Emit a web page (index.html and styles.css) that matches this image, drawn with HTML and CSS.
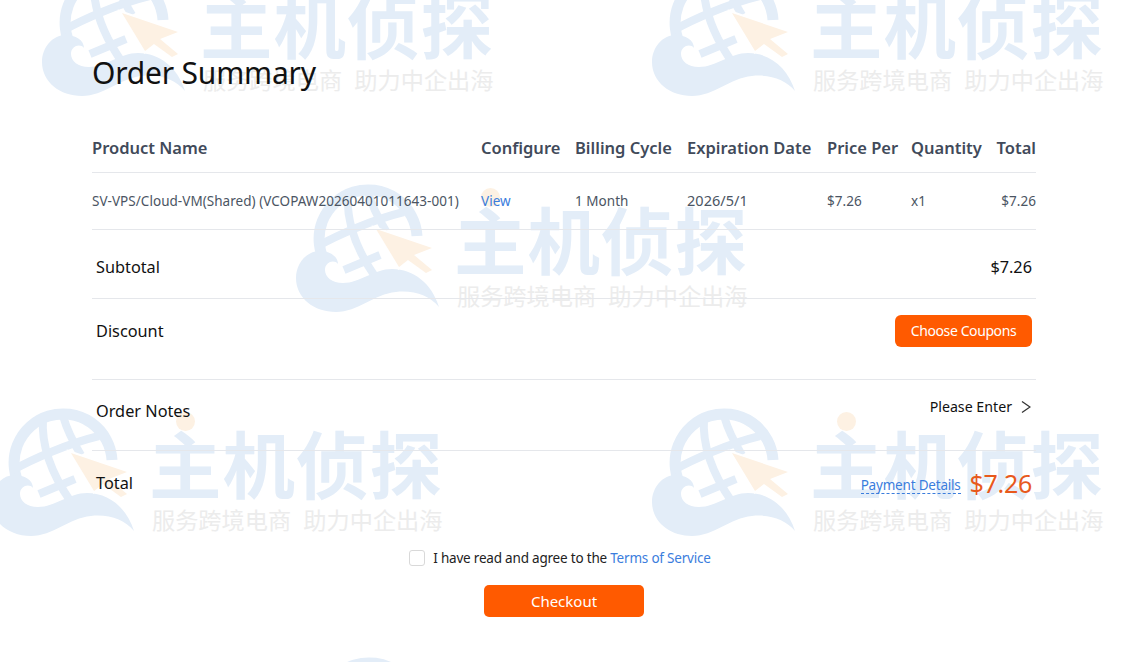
FILE: index.html
```html
<!DOCTYPE html>
<html lang="en">
<head>
<meta charset="utf-8">
<title>Order Summary</title>
<link rel="stylesheet" href="styles.css">
</head>
<body>
<svg class="defs" width="0" height="0" aria-hidden="true">
  <defs>
    <g id="logo">
      <g fill="none" stroke="#e3edf8">
        <path stroke-width="11" d="M30 78A49 49 0 1 1 121 50"/>
        <path stroke-width="8" d="M22 60C40 50 75 34 108 26"/>
        <path stroke-width="8" d="M52 8C50 36 62 66 80 92"/>
        <path stroke-width="8" d="M72 6C76 20 82 32 90 45"/>
        <path stroke-width="8" d="M48 84L84 69"/>
      </g>
      <path fill="#e3edf8" d="M143 121C136 98 118 83 96 83C78 83 64 97 47 97C36 97 29 91 29 84C29 76 38 73 42 78C42 70 33 65 24 65C10 65 0 78 0 92C0 112 18 126 40 126C62 126 78 108 100 106C118 104 134 110 143 121Z"/>
      <path fill="#fdf1e3" stroke="#fff" stroke-width="4" paint-order="stroke" d="M80 43L136 62L118 69L136 84L130 87L112 74L103 81Z"/>
    </g>
  </defs>
</svg>

<div class="watermarks" aria-hidden="true">
  <div class="mark mark-a"><svg class="mark-logo" viewBox="0 -2 145 130"><use href="#logo"/></svg><div class="mark-text"><span class="mark-dot"></span><div class="mark-big">主机侦探</div><div class="mark-small">服务跨境电商 助力中企出海</div></div></div>
  <div class="mark mark-b"><svg class="mark-logo" viewBox="0 -2 145 130"><use href="#logo"/></svg><div class="mark-text"><span class="mark-dot"></span><div class="mark-big">主机侦探</div><div class="mark-small">服务跨境电商 助力中企出海</div></div></div>
  <div class="mark mark-c"><svg class="mark-logo" viewBox="0 -2 145 130"><use href="#logo"/></svg><div class="mark-text"><span class="mark-dot"></span><div class="mark-big">主机侦探</div><div class="mark-small">服务跨境电商 助力中企出海</div></div></div>
  <div class="mark mark-d"><svg class="mark-logo" viewBox="0 -2 145 130"><use href="#logo"/></svg><div class="mark-text"><span class="mark-dot"></span><div class="mark-big">主机侦探</div><div class="mark-small">服务跨境电商 助力中企出海</div></div></div>
  <div class="mark mark-e"><svg class="mark-logo" viewBox="0 -2 145 130"><use href="#logo"/></svg><div class="mark-text"><span class="mark-dot"></span><div class="mark-big">主机侦探</div><div class="mark-small">服务跨境电商 助力中企出海</div></div></div>
  <div class="mark mark-f"><svg class="mark-logo" viewBox="0 -2 145 130"><use href="#logo"/></svg></div>
</div>

<main class="page">
  <h1 class="title">Order Summary</h1>

  <table class="items">
    <thead>
      <tr>
        <th class="col-name">Product Name</th>
        <th class="col-config">Configure</th>
        <th class="col-cycle">Billing Cycle</th>
        <th class="col-date">Expiration Date</th>
        <th class="col-price">Price Per</th>
        <th class="col-qty">Quantity</th>
        <th class="col-total">Total</th>
      </tr>
    </thead>
    <tbody>
      <tr>
        <td>SV-VPS/Cloud-VM(Shared) (VCOPAW20260401011643-001)</td>
        <td><a class="link" href="#">View</a></td>
        <td>1 Month</td>
        <td class="cell-date">2026/5/1</td>
        <td>$7.26</td>
        <td>x1</td>
        <td class="col-total">$7.26</td>
      </tr>
    </tbody>
  </table>

  <section class="summary">
    <div class="row row-subtotal"><span>Subtotal</span><span class="amount">$7.26</span></div>
    <div class="row row-discount"><span>Discount</span><button class="btn btn-coupon" type="button">Choose Coupons</button></div>
    <div class="row row-notes">
      <span class="notes-label">Order Notes</span>
      <span class="notes-value">Please Enter
        <svg class="chevron" viewBox="0 0 10 14" width="10" height="14"><path d="M1 1.5l8 5.5-8 5.5" fill="none" stroke="#333" stroke-width="1.3"/></svg>
      </span>
    </div>
    <div class="row row-total">
      <span>Total</span>
      <span class="total-right"><a class="details" href="#">Payment Details</a><span class="grand">$7.26</span></span>
    </div>
  </section>

  <label class="agree"><span class="checkbox"></span><span>I have read and agree to the <a class="link" href="#">Terms of Service</a></span></label>
  <div class="actions"><button class="btn btn-checkout" type="button">Checkout</button></div>
</main>
</body>
</html>
```
FILE: styles.css
```css
* { box-sizing: border-box; }
html, body { margin: 0; padding: 0; }
body {
  position: relative;
  width: 1129px;
  height: 662px;
  overflow: hidden;
  background: #fff;
  color: #111;
  font-family: "Noto Sans", "Open Sans", "Noto Sans CJK SC", sans-serif;
}
.defs { position: absolute; }

/* Watermark layer: tiled stamps on a free canvas */
.watermarks { position: absolute; inset: 0; overflow: hidden; }
.mark { position: absolute; display: flex; width: 460px; height: 130px; }
.mark-logo { width: 145px; height: 130px; flex: none; margin-right: 16px; }
.mark-text { position: relative; width: 300px; font-family: "Noto Sans CJK SC", sans-serif; }
.mark-big {
  height: 78px;
  margin-top: 15px;
  margin-left: -3px;
  font-size: 72.5px;
  line-height: 78px;
  letter-spacing: 1px;
  font-weight: 700;
  color: #e3edf8;
  white-space: nowrap;
}
.mark-small {
  margin-top: 3px;
  font-size: 23.2px;
  line-height: 30px;
  word-spacing: 7px;
  color: #ececec;
  white-space: nowrap;
}
.mark-dot {
  position: absolute;
  left: 24px;
  top: 4px;
  width: 19px;
  height: 19px;
  border-radius: 50%;
  background: #fdf1e3;
}
.mark-a { left: 42px; top: -32px; }
.mark-b { left: 652px; top: -32px; }
.mark-c { left: 296px; top: 184px; }
.mark-d { left: -9px; top: 408px; }
.mark-e { left: 652px; top: 408px; }
.mark-f { left: 297px; top: 657px; }

/* Content */
.page { position: relative; width: 944px; margin-left: 92px; padding-top: 53px; }
.title { margin: 0; font-size: 30px; line-height: 40px; font-weight: 400; letter-spacing: -0.2px; color: #111; }

.items { width: 944px; margin-top: 30px; border-collapse: collapse; table-layout: fixed; color: #4b5563; }
.items th {
  height: 49px;
  padding: 0;
  border-bottom: 1px solid #e5e7eb;
  text-align: left;
  font-size: 16.5px;
  font-weight: 600;
  color: #414a5a;
  white-space: nowrap;
}
.items td {
  height: 57px;
  padding: 0;
  border-bottom: 1px solid #e5e7eb;
  font-size: 13.5px;
  letter-spacing: 0.04px;
  white-space: nowrap;
}
.col-name { width: 389px; }
.col-config { width: 94px; }
.col-cycle { width: 112px; }
.col-date { width: 140px; }
.col-price { width: 84px; }
.col-qty { width: 85px; }
.items .col-total { text-align: right; }
.items .cell-date { font-size: 14.5px; padding-bottom: 2px; }

.link { color: #3b7ddd; text-decoration: none; }

.row {
  display: flex;
  justify-content: space-between;
  align-items: center;
  padding: 0 4px;
  border-bottom: 1px solid #e5e7eb;
  font-size: 16.3px;
  color: #111;
}
.row-subtotal { height: 69px; padding-top: 6px; }
.row-discount { height: 81px; align-items: flex-start; padding-top: 16px; }
.row-discount > span:first-child { line-height: 32px; }
.row-notes { height: 71px; align-items: flex-start; padding-top: 17px; }
.notes-label { line-height: 26px; padding-top: 1px; }
.notes-value { display: flex; align-items: center; gap: 9px; padding-right: 1px; font-size: 14.2px; line-height: 20px; }
.row-total { height: 66px; border-bottom: 0; padding-bottom: 2px; }
.total-right { display: flex; align-items: center; gap: 9px; }
.details {
  color: #3b7ddd;
  font-size: 13.5px;
  line-height: 16px;
  letter-spacing: -0.2px;
  text-decoration: none;
  border-bottom: 1px dashed #3b7ddd;
  margin-top: 5px;
}
.grand { color: #e8591c; font-size: 25px; line-height: 32px; letter-spacing: -0.3px; }

.btn { border: 0; background: #ff5a00; color: #fff; font-family: inherit; }
.btn-coupon { width: 137px; height: 32px; border-radius: 6px; font-size: 14px; letter-spacing: -0.4px; padding: 0; }
.btn-checkout { width: 160px; height: 32px; border-radius: 5px; font-size: 15px; padding: 0; }

.agree {
  display: flex;
  align-items: center;
  justify-content: center;
  gap: 8px;
  margin-top: 31px;
  height: 20px;
  padding-right: 8px;
  font-size: 13.5px;
  letter-spacing: -0.2px;
  color: #222;
}
.checkbox { width: 16px; height: 16px; border: 1px solid #d9d9d9; border-radius: 3px; background: #fff; }
.actions { display: flex; justify-content: center; margin-top: 17px; }
```
